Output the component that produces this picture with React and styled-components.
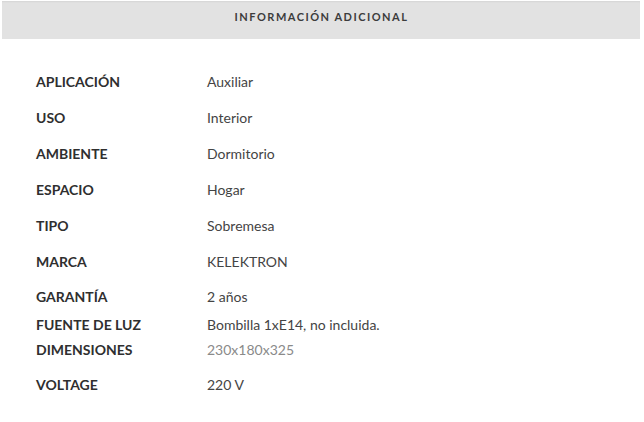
import React from 'react';
import styled, { createGlobalStyle } from 'styled-components';

const GlobalStyle = createGlobalStyle`
  body {
    margin: 0;
    background: #fff;
    font-family: Lato, "Open Sans", sans-serif;
  }
`;

const specs = [
  { label: 'APLICACIÓN', value: 'Auxiliar', h: 36 },
  { label: 'USO', value: 'Interior', h: 36 },
  { label: 'AMBIENTE', value: 'Dormitorio', h: 36 },
  { label: 'ESPACIO', value: 'Hogar', h: 36 },
  { label: 'TIPO', value: 'Sobremesa', h: 36 },
  { label: 'MARCA', value: 'KELEKTRON', h: 36 },
  { label: 'GARANTÍA', value: '2 años', h: 34 },
  { label: 'FUENTE DE LUZ', value: 'Bombilla 1xE14, no incluida.', h: 23 },
  { label: 'DIMENSIONES', value: '230x180x325', h: 27, muted: true },
  { label: 'VOLTAGE', value: '220 V', h: 43 },
];

const App = () => {
  return <Wrapper>
    <GlobalStyle />
    <TabBar>
      <TabTitle>INFORMACIÓN ADICIONAL</TabTitle>
    </TabBar>
    <SpecTable>
      {specs.map((item, index) => (
        <Row key={index} h={item.h}>
          <Label>{item.label}</Label>
          <Value muted={item.muted}>{item.value}</Value>
        </Row>
      ))}
    </SpecTable>
  </Wrapper>
}

export default App;

const Wrapper = styled.div`
  padding: 1px 4px 0 2px;
`

const TabBar = styled.div`
  background: #e2e2e2;
  height: 38px;
  display: flex;
  justify-content: center;
  align-items: flex-start;
  box-shadow: inset 0 2px 2px -1px rgba(0, 0, 0, 0.06);
`

const TabTitle = styled.div`
  margin-top: 9px;
  font-size: 11px;
  font-weight: 700;
  letter-spacing: 1.5px;
  color: #3c3c3c;
  padding-left: 1px;
`

const SpecTable = styled.div`
  padding: 24px 0 0 34px;
  display: flex;
  flex-direction: column;
`

const Row = styled.div`
  height: ${({ h }) => h}px;
  display: grid;
  grid-template-columns: 171px 1fr;
  align-items: center;
`

const Label = styled.div`
  font-size: 14px;
  font-weight: 700;
  color: #2f2f2f;
`

const Value = styled.div`
  font-size: 14px;
  color: ${({ muted }) => (muted ? '#8a8a8a' : '#444')};
`
